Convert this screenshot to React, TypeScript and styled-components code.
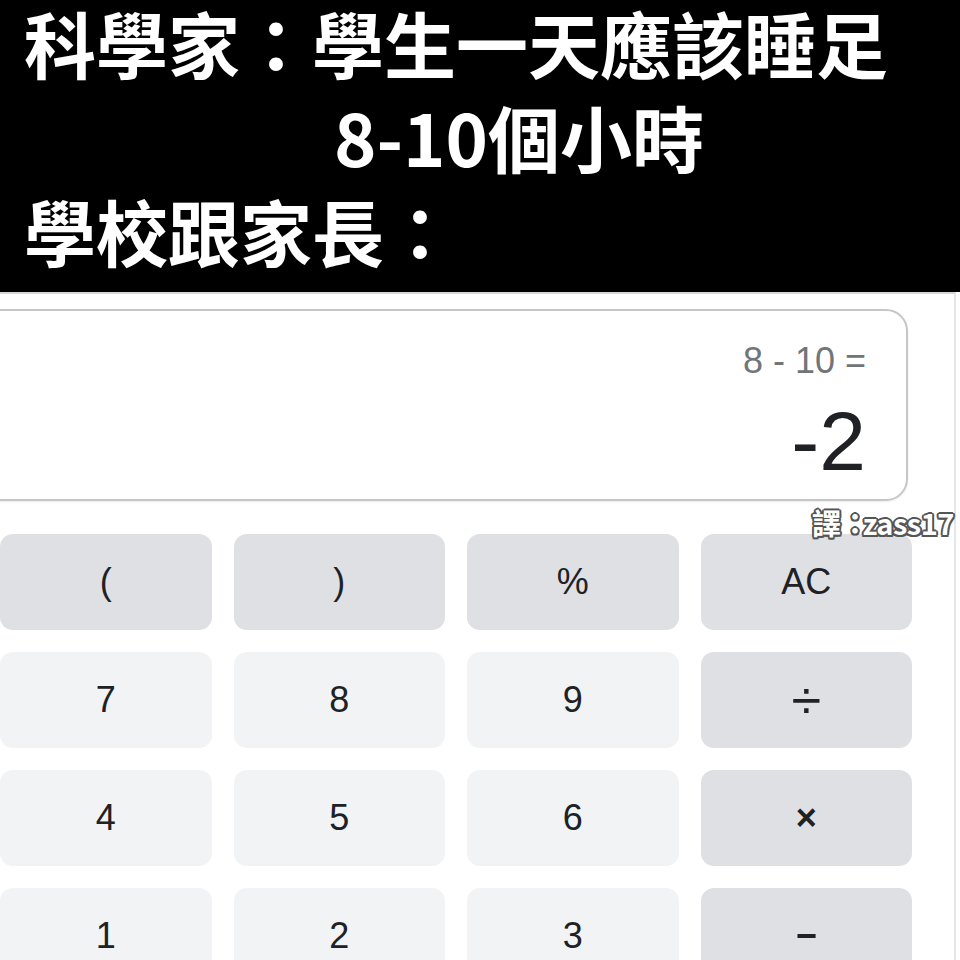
import * as React from 'react'
import styled, { createGlobalStyle } from 'styled-components';

const GlobalStyle = createGlobalStyle`
    html, body {
        margin: 0;
        padding: 0;
        background: #ffffff;
        overflow: hidden;
    }
    #root {
        width: 960px;
        height: 960px;
        overflow: hidden;
    }
`;

const Page = styled.div`
    width: 960px;
    height: 960px;
    display: flex;
    flex-direction: column;
    position: relative;
`;

const Caption = styled.div`
    background: #000;
    height: 292px;
    box-sizing: border-box;
    padding: 0 0 0 24px;
    color: #fff;
    font-family: "Noto Sans CJK TC", "Noto Sans", sans-serif;
    font-weight: 700;
    font-size: 72px;
    line-height: 94px;
`;

const CaptionLine = styled.div<{ $indent?: number }>`
    padding-left: ${p => p.$indent || 0}px;
    white-space: nowrap;
    &:first-child {
        margin-top: -5px;
    }
`;

const Calculator = styled.div`
    flex: 1;
    width: 956px;
    box-sizing: border-box;
    border-top: 2px solid #d6d6d6;
    border-right: 2px solid #e6e6e6;
    overflow: hidden;
    font-family: "Liberation Sans", Arial, sans-serif;
`;

const Display = styled.div`
    margin: 15px 0 0 -30px;
    width: 938px;
    height: 192px;
    box-sizing: border-box;
    border: 2px solid #c6c6c6;
    border-radius: 22px;
    padding: 32px 40px 0 0;
    display: flex;
    flex-direction: column;
    align-items: flex-end;
    box-shadow: 0 1px 2px rgba(0, 0, 0, 0.08);
`;

const Expression = styled.div`
    font-size: 36px;
    line-height: 36px;
    color: #70757a;
`;

const Result = styled.div`
    margin-top: 20px;
    font-size: 84px;
    line-height: 84px;
    color: #202124;
`;

const Credit = styled.div`
    position: absolute;
    left: 812px;
    top: 504px;
    white-space: nowrap;
    font-family: "Noto Sans CJK TC", "Noto Sans", sans-serif;
    font-weight: 700;
    font-size: 29px;
    line-height: 36px;
    letter-spacing: -0.5px;
    color: #fff;
    text-shadow:
        -1.5px -1.5px 0 #555, 1.5px -1.5px 0 #555,
        -1.5px 1.5px 0 #555, 1.5px 1.5px 0 #555,
        0 2px 0 #555, 2px 0 0 #555, 0 -2px 0 #555, -2px 0 0 #555;
`;

const Colon = styled.span`
    letter-spacing: -7px;
`;

const Keys = styled.div`
    margin-top: 33px;
    width: 912px;
    display: grid;
    grid-template-columns: repeat(4, 1fr);
    grid-auto-rows: 96px;
    column-gap: 22px;
    row-gap: 22px;
`;

const Key = styled.div<{ $op?: boolean; $sym?: 'div' | 'bold' }>`
    background: ${p => (p.$op ? '#dee0e4' : '#f1f3f4')};
    border-radius: 13px;
    display: flex;
    align-items: center;
    justify-content: center;
    font-size: ${p => (p.$sym === 'div' ? 54 : 36)}px;
    font-weight: ${p => (p.$sym === 'bold' ? 700 : 400)};
    color: #202124;
`;

type KeyDef = { label: string; op?: boolean; sym?: 'div' | 'bold' };

const keys: KeyDef[] = [
    { label: '(', op: true }, { label: ')', op: true }, { label: '%', op: true }, { label: 'AC', op: true },
    { label: '7' }, { label: '8' }, { label: '9' }, { label: '÷', op: true, sym: 'div' },
    { label: '4' }, { label: '5' }, { label: '6' }, { label: '×', op: true, sym: 'bold' },
    { label: '1' }, { label: '2' }, { label: '3' }, { label: '−', op: true, sym: 'bold' },
];

export default function App() {
    return (
        <Page>
            <GlobalStyle />
            <Caption>
                <CaptionLine>科學家：學生一天應該睡足</CaptionLine>
                <CaptionLine $indent={310}>8-10個小時</CaptionLine>
                <CaptionLine>學校跟家長：</CaptionLine>
            </Caption>
            <Calculator>
                <Display>
                    <Expression>8 - 10 =</Expression>
                    <Result>-2</Result>
                </Display>
                <Keys>
                    {keys.map((k, i) => (
                        <Key key={i} $op={k.op} $sym={k.sym}>{k.label}</Key>
                    ))}
                </Keys>
            </Calculator>
            <Credit>譯<Colon>：</Colon>zass17</Credit>
        </Page>
    );
}
